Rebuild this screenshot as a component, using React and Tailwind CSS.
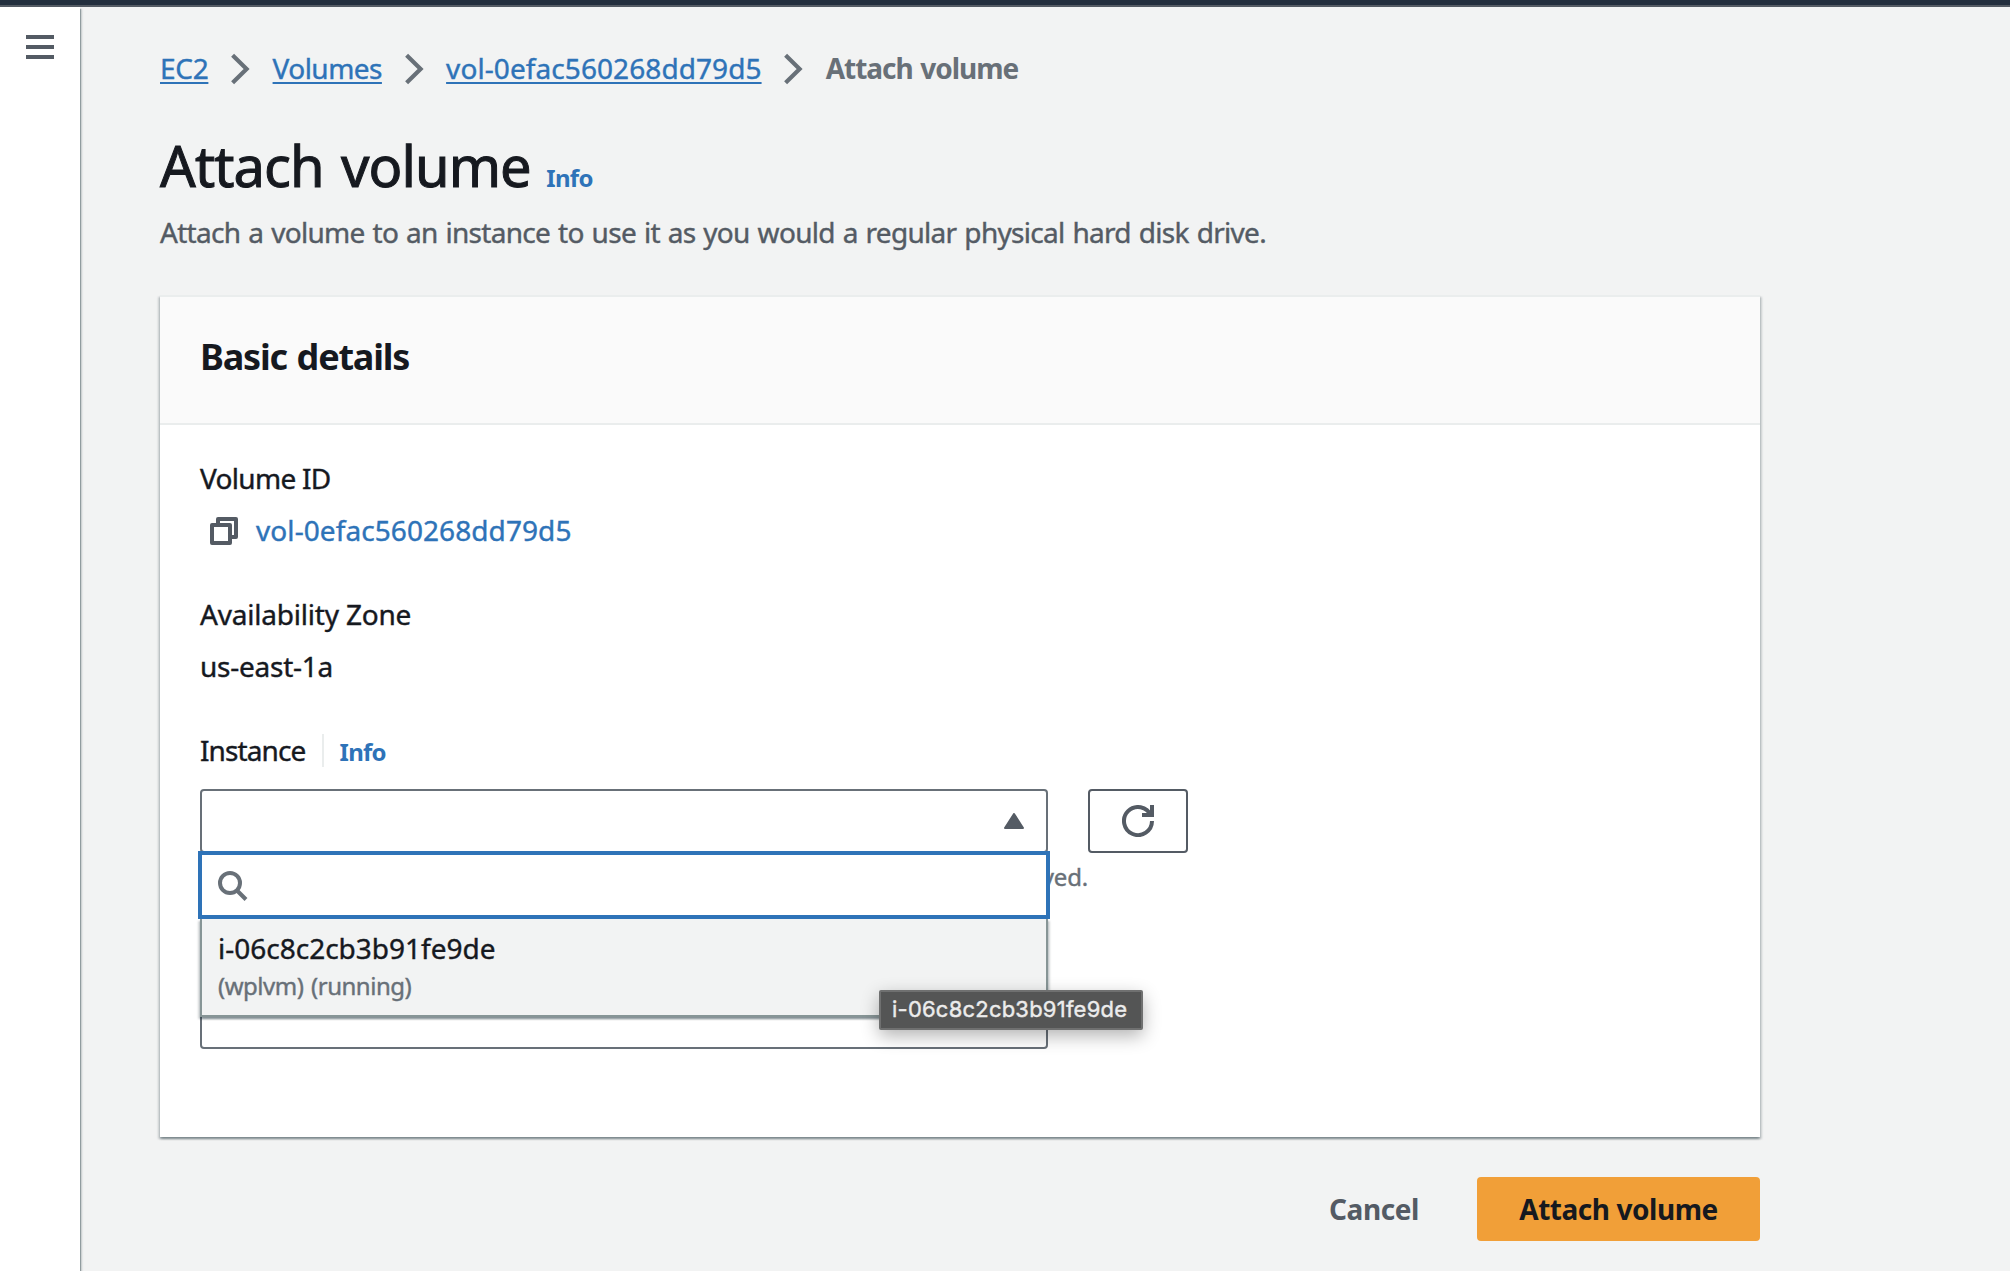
import React from "react";

const FONT = "font-['Noto_Sans','Open_Sans',sans-serif]";

function Chevron() {
  return (
    <svg className="mx-[22.6px] mt-0.5 h-[32px] w-[19px] shrink-0" viewBox="0 0 19 32" fill="none">
      <path d="M1.6 2.2 L15.6 16 L1.6 29.8" stroke="#687078" strokeWidth="4.2" />
    </svg>
  );
}

function Crumb({ children, className }) {
  return (
    <a className={"text-[#2e73b8] underline decoration-2 underline-offset-[3px] " + className}>{children}</a>
  );
}

function Field({ label, children, labelClass }) {
  return (
    <div>
      <div className={"leading-[44px] " + labelClass}>{label}</div>
      <div className="mt-2 flex h-[44px] items-center">{children}</div>
    </div>
  );
}

function CopyIcon() {
  return (
    <svg className="ml-[10px] mr-[18px] mt-0.5 h-7 w-7" viewBox="0 0 28 28" fill="none" stroke="#545b64" strokeWidth="4" strokeLinejoin="round">
      <path d="M8 6 V2 H26 V20 H22" />
      <rect x="2" y="8" width="18" height="18" />
    </svg>
  );
}

function RefreshIcon() {
  return (
    <svg className="h-8 w-8" viewBox="0 0 32 32" fill="none">
      <path d="M30 16 A14 14 0 1 1 28.9 10.6" stroke="#545b64" strokeWidth="4" />
      <path d="M30 0 V10 H20" stroke="#545b64" strokeWidth="4" />
    </svg>
  );
}

function SearchIcon() {
  return (
    <svg className="mt-0.5 h-[30px] w-[30px]" viewBox="0 0 30 30" fill="none" stroke="#687078" strokeWidth="4">
      <circle cx="12" cy="12" r="10" />
      <path d="M19 19.5 L28 28.5" />
    </svg>
  );
}

function InstanceDropdown() {
  return (
    <div className="absolute -left-[2px] top-[62px] z-10 w-[852px]">
      <div className="relative z-10 flex h-[68px] items-center border-4 border-[#2e73b8] bg-white pl-4">
        <SearchIcon />
      </div>
      <div className="relative mx-[2px] h-[98px] border-x-2 border-b-2 border-[#879596] bg-[#f2f3f3] pl-[16px] pt-[7px] shadow-[0_2px_2px_0_rgba(0,28,36,0.3),2px_2px_2px_0_rgba(0,28,36,0.15),-2px_2px_2px_0_rgba(0,28,36,0.15)]">
        <div className="leading-[44px] text-[#16191f]">i-06c8c2cb3b91fe9de</div>
        <div className="text-[24px] leading-[32px] tracking-[-0.5px] [word-spacing:2px] text-[#687078]">(wplvm) (running)</div>
      </div>
      <div className="absolute left-[681px] top-[139px] z-20 flex h-[40px] w-[264px] items-center rounded-[2px] border-2 border-[#6f7070] bg-[#545555] pb-0.5 pl-[11px] font-['Inter',sans-serif] text-[22px] tracking-[0.22px] text-[#ececec] shadow-[0_6px_18px_rgba(0,0,0,0.3)]">
        i-06c8c2cb3b91fe9de
      </div>
    </div>
  );
}

export default function App() {
  return (
    <div className={"flex h-[1271px] w-[2010px] flex-col overflow-hidden bg-[#f2f3f3] text-[28px] text-[#16191f] [-webkit-text-stroke-width:0.4px] " + FONT}>
      <div className="h-[7px] shrink-0 border-b-2 border-[#545b64] bg-[#232f3e]" />
      <div className="flex flex-1">
        <aside className="w-[80px] shrink-0 bg-white shadow-[1px_2px_1px_0_rgba(0,28,36,0.3),2px_2px_2px_0_rgba(0,28,36,0.15)]">
          <div className="ml-[26px] mt-[28px] flex w-7 flex-col gap-1.5">
            <div className="h-1 bg-[#545b64]" />
            <div className="h-1 bg-[#545b64]" />
            <div className="h-1 bg-[#545b64]" />
          </div>
        </aside>

        <main className="ml-[80px] w-[1600px]">
          <nav className="mt-[39px] flex h-[44px] items-center whitespace-nowrap leading-[44px]">
            <Crumb className="tracking-[-0.3px]">EC2</Crumb>
            <Chevron />
            <Crumb className="tracking-[-0.54px]">Volumes</Crumb>
            <Chevron />
            <Crumb className="tracking-[0.08px]">vol-0efac560268dd79d5</Crumb>
            <Chevron />
            <span className="font-bold tracking-[-1.05px] [word-spacing:1.5px] text-[#687078] [-webkit-text-stroke-width:0]">Attach volume</span>
          </nav>

          <div className="mt-10 flex h-[70px] items-baseline leading-[70px]">
            <h1 className="text-[56px] tracking-[-0.9px] [word-spacing:3.5px] [-webkit-text-stroke-width:1px]">Attach volume</h1>
            <a className="ml-[15.5px] text-[24px] font-bold tracking-[-0.7px] text-[#2e73b8] [-webkit-text-stroke-width:0]">Info</a>
          </div>
          <p className="mt-[10px] whitespace-nowrap leading-[44px] tracking-[-0.7px] [word-spacing:1.3px] text-[#545b64]">
            Attach a volume to an instance to use it as you would a regular physical hard disk drive.
          </p>

          <section className="mt-[41px] h-[842px] border-t-2 border-[#eaeded] bg-white shadow-[0_2px_2px_0_rgba(0,28,36,0.3),2px_2px_2px_0_rgba(0,28,36,0.15),-2px_2px_2px_0_rgba(0,28,36,0.15)]">
            <header className="h-[128px] border-b-2 border-[#eaeded] bg-[#fafafa] pl-10 pt-[38px]">
              <h2 className="text-[36px] font-bold leading-[44px] tracking-[-1.2px] [word-spacing:1.5px] [-webkit-text-stroke-width:0]">Basic details</h2>
            </header>

            <div className="px-10 pt-[31px]">
              <div className="flex flex-col gap-10">
                <Field label="Volume ID" labelClass="tracking-[-0.7px]">
                  <CopyIcon />
                  <a className="tracking-[0.08px] text-[#2e73b8]">vol-0efac560268dd79d5</a>
                </Field>
                <Field label="Availability Zone" labelClass="tracking-[-0.2px]">
                  <span className="tracking-[-0.25px]">us-east-1a</span>
                </Field>
              </div>

              <div className="mt-10 flex h-[44px] items-center leading-[44px]">
                <label className="w-[122px] tracking-[-0.9px]">Instance</label>
                <div className="h-[33px] w-[2px] bg-[#eaeded]" />
                <a className="ml-[15.5px] mt-[3px] text-[24px] font-bold tracking-[-0.7px] text-[#2e73b8] [-webkit-text-stroke-width:0]">Info</a>
              </div>

              <div className="mt-[17px] flex gap-10">
                <div className="relative">
                  <div className="flex h-[64px] w-[848px] items-center justify-end rounded-[4px] border-2 border-[#687078] bg-white pr-[22px]">
                    <svg className="h-4 w-5" viewBox="0 0 20 16">
                      <path d="M10 1 L19 15 H1 Z" fill="#545b64" stroke="#545b64" strokeWidth="2" strokeLinejoin="round" />
                    </svg>
                  </div>
                  <InstanceDropdown />
                </div>
                <button className="flex h-[64px] w-[100px] items-center justify-center rounded-[4px] border-2 border-[#545b64] bg-white">
                  <RefreshIcon />
                </button>
              </div>
              <p className="mt-2 w-[888px] text-right text-[24px] leading-[32px] tracking-[-0.2px] text-[#687078]">yed.</p>
              <div className="mt-[92px] h-[64px] w-[848px] rounded-[4px] border-2 border-[#687078] bg-white" />
            </div>
          </section>

          <div className="mt-10 flex justify-end font-bold [-webkit-text-stroke-width:0]">
            <button className="mr-[58px] tracking-[-0.4px] text-[#545b64]">Cancel</button>
            <button className="h-[64px] w-[283px] rounded-[4px] bg-[#f19f38] tracking-[-0.45px]">Attach volume</button>
          </div>
        </main>
      </div>
    </div>
  );
}
